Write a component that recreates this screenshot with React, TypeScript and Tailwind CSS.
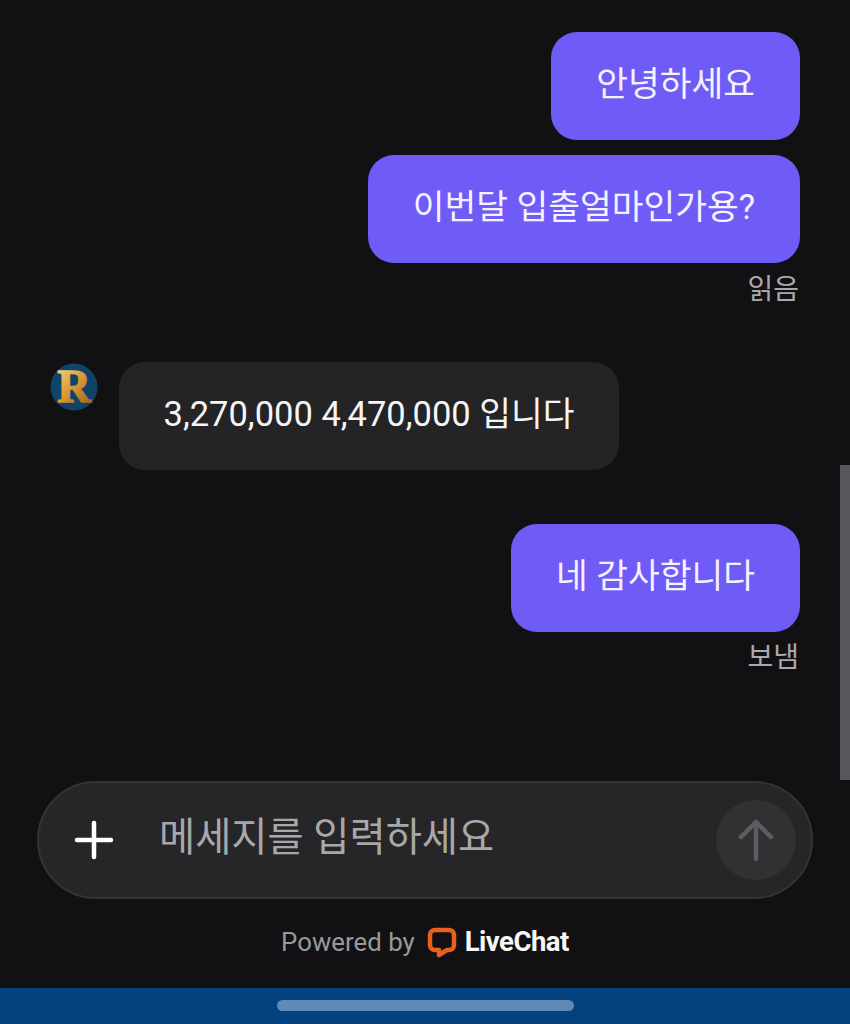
import React from "react";

const FONT = "font-['Roboto','Noto_Sans_CJK_KR',sans-serif]";

function Outgoing({ children }: { children: React.ReactNode }) {
  return (
    <div className="flex h-[108px] items-center rounded-[26px] bg-[#6f5bf6] px-[45px] pb-[3px] text-[34.5px] text-[#f4f2ff]">
      {children}
    </div>
  );
}

function Avatar() {
  return (
    <svg width="50" height="50" viewBox="0 0 50 50" className="shrink-0">
      <defs>
        <linearGradient id="gold" x1="0" y1="0" x2="0.7" y2="1">
          <stop offset="0" stopColor="#f8dc98" />
          <stop offset="0.5" stopColor="#dca03a" />
          <stop offset="1" stopColor="#a5691a" />
        </linearGradient>
      </defs>
      <circle cx="25" cy="25" r="23.5" fill="#0f4468" />
      <text x="25" y="40" textAnchor="middle" fontFamily="'Liberation Serif',serif" fontWeight="700" fontSize="46" fill="url(#gold)" stroke="url(#gold)" strokeWidth="1.6">
        R
      </text>
    </svg>
  );
}

export default function App() {
  return (
    <div className={`${FONT} relative flex h-[1024px] w-[850px] flex-col overflow-hidden bg-[#111113]`}>
      <div className="absolute right-0 top-[465px] h-[315px] w-[10px] bg-[#56565c]" />

      <div className="flex h-[781px] flex-col pt-[32px]">
        <div className="flex flex-col items-end gap-[15px] pr-[50px]">
          <Outgoing>안녕하세요</Outgoing>
          <Outgoing>이번달 입출얼마인가용?</Outgoing>
        </div>
        <div className="mt-[10px] pr-[51px] text-right text-[28px] leading-[34px] text-[#a9a9ad]">읽음</div>

        <div className="mt-[55px] flex items-start gap-[20px] pl-[49px]">
          <Avatar />
          <div className="flex h-[108px] w-[500px] items-center justify-center rounded-[26px] bg-[#242427] pb-[3px] text-[34.5px] text-[#f5f5f5]">
            3,270,000 4,470,000 입니다
          </div>
        </div>

        <div className="mt-[54px] flex justify-end pr-[50px]">
          <Outgoing>네 감사합니다</Outgoing>
        </div>
        <div className="mt-[9px] pr-[51px] text-right text-[28px] leading-[34px] text-[#a9a9ad]">보냄</div>
      </div>

      <div className="flex justify-center">
        <div className="flex h-[118px] w-[776px] items-center rounded-[59px] border-2 border-[#343437] bg-[#262628] pl-[35px] pr-[15px]">
          <svg width="40" height="40" viewBox="0 0 40 40" fill="none" stroke="#ffffff" strokeWidth="4.5" strokeLinecap="round" className="shrink-0">
            <path d="M20 3v34M3 20h34" />
          </svg>
          <div className="ml-[45px] flex-1 pb-[3px] text-[39.3px] text-[#a8a8aa]">메세지를 입력하세요</div>
          <div className="flex h-[80px] w-[80px] items-center justify-center rounded-full bg-[#313134]">
            <svg width="36" height="42" viewBox="0 0 36 42" fill="none" stroke="#5d5d61" strokeWidth="4.5" strokeLinecap="round" strokeLinejoin="round">
              <path d="M18 40V3M3 18 18 3l15 15" />
            </svg>
          </div>
        </div>
      </div>

      <div className="mt-[21px] flex h-[44px] items-center justify-center">
        <span className="text-[25.8px] text-[#98989b]">Powered by</span>
        <svg width="30" height="31" viewBox="0 0 30 31" fill="none" className="ml-[12px] shrink-0">
          <path d="M8 3h14a5 5 0 0 1 5 5v10a5 5 0 0 1-5 5h-2l-8 5v-5H8a5 5 0 0 1-5-5V8a5 5 0 0 1 5-5Z" stroke="#e8601c" strokeWidth="4.5" strokeLinejoin="round" />
        </svg>
        <span className="ml-[8px] text-[27.5px] font-bold tracking-[-0.5px] text-[#f7f7f7]">LiveChat</span>
      </div>

      <div className="mt-auto flex h-[36px] items-center justify-center bg-[#03417f] pb-[2px]">
        <div className="h-[11px] w-[297px] rounded-full bg-[#5f8ab8]" />
      </div>
    </div>
  );
}
